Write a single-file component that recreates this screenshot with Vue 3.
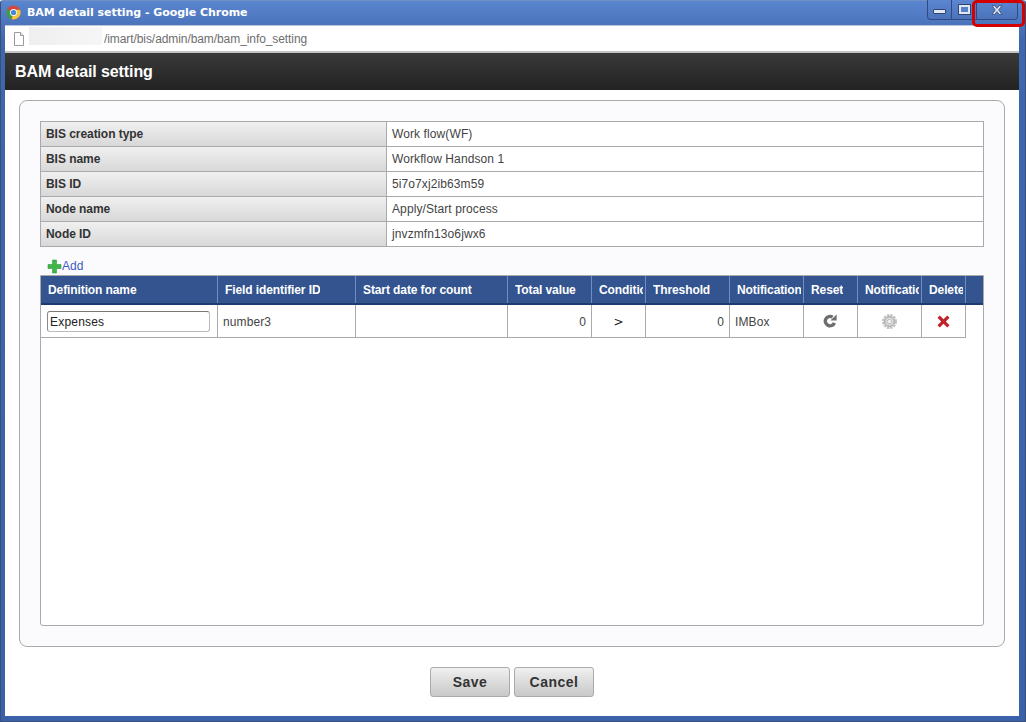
<template>
  <div class="window">
    <div class="titlebar">
      <svg class="chrome-logo" width="15" height="15" viewBox="0 0 16 16">
        <circle cx="8" cy="8" r="7.5" fill="#d8453a" />
        <path d="M8 8 L1.5 4.2 A7.5 7.5 0 0 0 6 15.2 Z" fill="#3f9d4a" />
        <path d="M8 8 L6 15.2 A7.5 7.5 0 0 0 14.9 5 L8 5 Z" fill="#f2c73c" />
        <circle cx="8" cy="8" r="3.8" fill="#f4f4f4" />
        <circle cx="8" cy="8" r="2.8" fill="#4a86d8" />
      </svg>
      <span class="window-title">BAM detail setting - Google Chrome</span>
      <div class="window-buttons">
        <div class="win-btn min-btn"><span class="min-glyph"></span></div>
        <div class="win-btn max-btn"><span class="max-glyph"></span></div>
        <div class="win-btn close-btn">
          <svg width="12" height="10" viewBox="0 0 11 9">
            <path d="M1 0.5 H3.5 L5.5 3 L7.5 0.5 H10 L7 4.5 L10 8.5 H7.5 L5.5 6 L3.5 8.5 H1 L4 4.5 Z" fill="#dfe7f5" stroke="#33456e" stroke-width="0.7" />
          </svg>
        </div>
      </div>
    </div>

    <div class="content">
      <div class="addressbar">
        <svg class="page-icon" width="12" height="14" viewBox="0 0 12 14">
          <path d="M1.5 0.5 H7.5 L10.5 3.5 V13.5 H1.5 Z" fill="#fff" stroke="#9a9a9a" />
          <path d="M7.5 0.5 V3.5 H10.5" fill="#eee" stroke="#9a9a9a" />
        </svg>
        <span class="host-mask"></span>
        <span class="url">/imart/bis/admin/bam/bam_info_setting</span>
      </div>

      <div class="page-header">BAM detail setting</div>

      <div class="page-body">
        <div class="panel">
          <div class="info-table">
            <template v-for="row in infoRows" :key="row.label">
              <div class="info-label">{{ row.label }}</div>
              <div class="info-value">{{ row.value }}</div>
            </template>
          </div>

          <div class="add-row">
            <svg width="15" height="15" viewBox="0 0 15 15">
              <path d="M5.5 1 H9.5 V5.5 H14 V9.5 H9.5 V14 H5.5 V9.5 H1 V5.5 H5.5 Z" fill="#3fb54a" stroke="#2f9a3a" stroke-width="0.6" />
            </svg>
            <a class="add-link">Add</a>
          </div>

          <div class="grid-box">
            <div class="grid-head">
              <div class="grid-cols">
                <div v-for="col in columns" :key="col" class="head-cell"><span class="head-text">{{ col }}</span></div>
              </div>
            </div>
            <div class="grid-cols">
              <div class="cell first"><input class="name-input" value="Expenses" /></div>
              <div class="cell">number3</div>
              <div class="cell"></div>
              <div class="cell num">0</div>
              <div class="cell center condition">&gt;</div>
              <div class="cell num">0</div>
              <div class="cell">IMBox</div>
              <div class="cell center icon-cell">
                <svg class="reset-icon" width="14" height="14" viewBox="0 0 14 14">
                  <path d="M11.4 8.8 A4.7 4.7 0 1 1 9.6 3.2" fill="none" stroke="#6e6e6e" stroke-width="3.4" />
                  <path d="M7.4 6.4 H13.6 V0.6 Z" fill="#6e6e6e" />
                </svg>
              </div>
              <div class="cell center icon-cell">
                <svg width="15" height="15" viewBox="0 0 14 14">
                  <circle cx="7" cy="7" r="4.6" fill="#dcdcdc" stroke="#b4b4b4" stroke-width="1.6" />
                  <circle cx="7" cy="7" r="6.1" fill="none" stroke="#c2c2c2" stroke-width="1.8" stroke-dasharray="2.2 1" />
                  <circle cx="7" cy="7" r="2.1" fill="#f0f0f0" stroke="#aaa" stroke-width="0.6" />
                </svg>
              </div>
              <div class="cell center icon-cell">
                <svg width="13" height="13" viewBox="0 0 13 13">
                  <path d="M0.5 2.8 L2.8 0.5 L6.5 4.2 L10.2 0.5 L12.5 2.8 L8.8 6.5 L12.5 10.2 L10.2 12.5 L6.5 8.8 L2.8 12.5 L0.5 10.2 L4.2 6.5 Z" fill="#c2222a" />
                </svg>
              </div>
            </div>
          </div>
        </div>

        <div class="actions">
          <button class="action-btn">Save</button>
          <button class="action-btn">Cancel</button>
        </div>
      </div>
    </div>

    <!-- red marker from the manual, sits over the close button -->
    <div class="close-marker"></div>
  </div>
</template>

<script setup>
const infoRows = [
  { label: 'BIS creation type', value: 'Work flow(WF)' },
  { label: 'BIS name', value: 'Workflow Handson 1' },
  { label: 'BIS ID', value: '5i7o7xj2ib63m59' },
  { label: 'Node name', value: 'Apply/Start process' },
  { label: 'Node ID', value: 'jnvzmfn13o6jwx6' },
];

const columns = [
  'Definition name',
  'Field identifier ID',
  'Start date for count',
  'Total value',
  'Condition',
  'Threshold',
  'Notification',
  'Reset',
  'Notification',
  'Delete',
];
</script>

<style>
html,
body {
  margin: 0;
  background: #fff;
  overflow: hidden;
}
</style>

<style scoped>
.window {
  position: relative;
  box-sizing: border-box;
  width: 1026px;
  height: 722px;
  display: flex;
  flex-direction: column;
  padding: 0 6px 5px 4px;
  background: linear-gradient(#5a86cf, #3f67ad 40px, #3a62a8);
  border: 1px solid #3b4f78;
  border-top-color: #6f8fc4;
  border-radius: 3px 3px 0 0;
  font-family: "Liberation Sans", Arial, sans-serif;
  color: #333;
}

.titlebar {
  height: 25px;
  display: flex;
  align-items: center;
  flex-shrink: 0;
  margin-top: -1px;
}

.chrome-logo {
  margin: 0 6px 0 1px;
}

.window-title {
  font-family: "DejaVu Sans", sans-serif;
  font-size: 11px;
  font-weight: 700;
  letter-spacing: -0.05px;
  color: #fff;
}

.window-buttons {
  margin-left: auto;
  margin-right: 1px;
  display: flex;
  height: 19px;
  align-self: flex-start;
  border: 1px solid #2f4a80;
  border-top: none;
  border-radius: 0 0 4px 4px;
  background: linear-gradient(#5c86d0, #4a73bb);
}

.win-btn {
  display: flex;
  align-items: center;
  justify-content: center;
  border-left: 1px solid #2f4a80;
}

.min-btn {
  width: 23px;
  border-left: none;
}

.max-btn {
  width: 24px;
}

.close-btn {
  width: 40px;
}

.min-glyph {
  width: 11px;
  height: 3px;
  margin-top: 4px;
  background: #dfe7f5;
  border: 1px solid #33456e;
  border-radius: 1px;
}

.max-glyph {
  box-sizing: border-box;
  width: 11px;
  height: 9px;
  border: 2px solid #dfe7f5;
  outline: 1px solid #33456e;
  background: #5a80c6;
}

.content {
  flex: 1;
  display: flex;
  flex-direction: column;
  min-height: 0;
  background: #fff;
}

.addressbar {
  height: 25px;
  flex-shrink: 0;
  display: flex;
  align-items: center;
  padding-left: 8px;
  background: #fff;
  border-top: 1px solid #b9c4d8;
  border-bottom: 2px solid #c4c4c4;
}

.page-icon {
  margin-right: 4px;
}

.host-mask {
  width: 73px;
  height: 18px;
  margin-top: -6px;
  margin-right: 2px;
  background: linear-gradient(90deg, #efefef, #f6f6f6);
}

.url {
  font-size: 12px;
  letter-spacing: -0.08px;
  color: #6e6e6e;
}

.page-header {
  height: 37px;
  flex-shrink: 0;
  display: flex;
  align-items: center;
  padding-left: 10px;
  background: linear-gradient(#3a3a3a, #222);
  color: #fff;
  font-size: 16px;
  font-weight: 700;
  letter-spacing: -0.1px;
}

.page-body {
  flex: 1;
  display: flex;
  flex-direction: column;
  padding: 10px 14px 0;
}

.panel {
  box-sizing: border-box;
  width: 986px;
  height: 547px;
  display: flex;
  flex-direction: column;
  padding: 20px;
  background: #fbfbfe;
  border: 1px solid #aaa;
  border-radius: 8px;
}

.info-table {
  display: grid;
  grid-template-columns: 346px 1fr;
  grid-auto-rows: 25px;
  border-top: 1px solid #aaa;
  border-left: 1px solid #aaa;
  flex-shrink: 0;
}

.info-label,
.info-value {
  display: flex;
  align-items: center;
  padding-left: 5px;
  border-right: 1px solid #aaa;
  border-bottom: 1px solid #aaa;
  font-size: 12px;
}

.info-label {
  background: linear-gradient(#f0f0f0, #d8d8d8);
  font-weight: 700;
  letter-spacing: -0.05px;
}

.info-value {
  background: #fff;
  color: #444;
  letter-spacing: 0.1px;
}

.add-row {
  height: 28px;
  flex-shrink: 0;
  display: flex;
  align-items: center;
  padding-left: 7px;
  padding-top: 10px;
  box-sizing: border-box;
}

.add-link {
  font-size: 12px;
  color: #3d5cc4;
}

.grid-box {
  flex: 1;
  background: #fff;
  border: 1px solid #aaa;
  border-radius: 0 0 3px 3px;
}

.grid-head {
  height: 27px;
  background: #33548f;
  border-bottom: 2px solid #1f3a6e;
}

.grid-cols {
  display: grid;
  grid-template-columns: 177px 138px 152px 84px 54px 84px 74px 54px 64px 44px;
  width: 925px;
}

.head-cell {
  height: 27px;
  display: flex;
  align-items: center;
  padding: 1px 2px 0 7px;
  overflow: hidden;
  white-space: nowrap;
  border-right: 1px solid #6f8fc4;
  box-sizing: border-box;
  color: #fff;
  font-size: 12px;
  font-weight: 700;
  letter-spacing: -0.1px;
}

.head-text {
  display: block;
  overflow: hidden;
}

.cell {
  box-sizing: border-box;
  height: 33px;
  display: flex;
  align-items: center;
  padding: 1px 5px 0;
  border-right: 1px solid #aaa;
  border-bottom: 1px solid #aaa;
  font-size: 12px;
  letter-spacing: 0.1px;
  color: #444;
}

.first {
  padding: 0 5px 0 6px;
}

.num {
  justify-content: flex-end;
}

.center {
  justify-content: center;
  padding: 1px 0 0;
}

.icon-cell {
  padding: 0;
}

.reset-icon {
  margin-right: 2px;
}

.condition {
  font-family: "DejaVu Sans", sans-serif;
  color: #222;
}

.name-input {
  box-sizing: border-box;
  width: 163px;
  height: 21px;
  padding: 2px 2px 0;
  border: 1px solid #bbb;
  border-top-color: #777;
  border-left-color: #888;
  border-radius: 3px;
  background: #fff;
  font-family: "Liberation Sans", Arial, sans-serif;
  font-size: 12px;
  letter-spacing: 0.2px;
  color: #222;
}

.actions {
  display: flex;
  justify-content: center;
  gap: 4px;
  margin-top: 20px;
}

.action-btn {
  box-sizing: border-box;
  width: 80px;
  height: 30px;
  padding: 0;
  background: linear-gradient(#f0f0f0, #c8c8c8);
  border: 1px solid #aaa;
  border-radius: 3px;
  font-family: "Liberation Sans", Arial, sans-serif;
  font-size: 14px;
  font-weight: 700;
  letter-spacing: 0.5px;
  color: #333;
}

.close-marker {
  position: absolute;
  left: 971px;
  top: -1px;
  width: 47px;
  height: 21px;
  border: 3px solid #d40000;
  border-radius: 5px;
}
</style>
